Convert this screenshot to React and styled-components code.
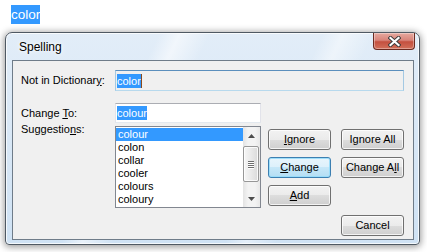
import React from 'react';
import styled, { createGlobalStyle } from 'styled-components';

const GlobalStyle = createGlobalStyle`
  html, body {
    margin: 0;
    padding: 0;
    background: #ffffff;
  }
  body {
    font-family: "Liberation Sans", Arial, sans-serif;
  }
`;

const suggestions = ['colour', 'colon', 'collar', 'cooler', 'colours', 'coloury'];

const CloseIcon = () => (
    <svg width="13" height="11" viewBox="0 0 13 11">
        <path d="M2.5 2 L10.5 9 M10.5 2 L2.5 9" stroke="#3a3a3a" strokeWidth="4" strokeLinecap="square" fill="none" />
        <path d="M2.5 2 L10.5 9 M10.5 2 L2.5 9" stroke="#ffffff" strokeWidth="2.2" strokeLinecap="square" fill="none" />
    </svg>
);

const App = () => {
    return (
        <Page>
            <GlobalStyle />
            <DocText><Highlight>color</Highlight></DocText>
            <Window>
                <TitleBar>
                    <Title>Spelling</Title>
                    <CloseButton><CloseIcon /></CloseButton>
                </TitleBar>
                <Client>
                    <TopRow>
                        <Label>Not in Dictionar<u>y</u>:</Label>
                        <ReadOnlyField>
                            <Selected>color</Selected>
                            <Caret />
                        </ReadOnlyField>
                    </TopRow>
                    <Body>
                        <LabelColumn>
                            <Label $tall>Change <u>T</u>o:</Label>
                            <Label>Suggestio<u>n</u>s:</Label>
                        </LabelColumn>
                        <FieldColumn>
                            <TextField><Selected>colour</Selected></TextField>
                            <ListBox>
                                <Items>
                                    {suggestions.map((s, i) => (
                                        <Item key={s} $active={i === 0}>{s}</Item>
                                    ))}
                                </Items>
                                <ScrollBar>
                                    <ArrowButton>
                                        <svg width="7" height="4" viewBox="0 0 7 4"><path d="M0 4 L3.5 0 L7 4 Z" fill="#4d4d4d" /></svg>
                                    </ArrowButton>
                                    <Track>
                                        <Thumb>
                                            <Grip /><Grip /><Grip /><Grip />
                                        </Thumb>
                                    </Track>
                                    <ArrowButton>
                                        <svg width="7" height="4" viewBox="0 0 7 4"><path d="M0 0 L7 0 L3.5 4 Z" fill="#4d4d4d" /></svg>
                                    </ArrowButton>
                                </ScrollBar>
                            </ListBox>
                        </FieldColumn>
                        <ButtonGrid>
                            <Button><u>I</u>gnore</Button>
                            <Button>I<u>g</u>nore All</Button>
                            <Button $default><u>C</u>hange</Button>
                            <Button>Change A<u>l</u>l</Button>
                            <Button><u>A</u>dd</Button>
                        </ButtonGrid>
                    </Body>
                    <Footer>
                        <Button>Cancel</Button>
                    </Footer>
                </Client>
            </Window>
        </Page>
    );
};

export default App;

// ------ UI Section
const Page = styled.div`
    width: 427px;
    height: 252px;
    padding: 5px 0 0 0;
    box-sizing: border-box;
    overflow: hidden;
`;

const DocText = styled.div`
    padding-left: 11px;
    height: 19px;
`;

const Highlight = styled.span`
    display: inline-block;
    background: #3399ff;
    color: #ffffff;
    font-size: 13.5px;
    line-height: 19px;
`;

const Window = styled.div`
    margin: 8px 0 0 5px;
    width: 415px;
    height: 213px;
    box-sizing: border-box;
    border: 1px solid #4f5963;
    border-radius: 7px 7px 4px 4px;
    padding: 0 5px 4px 6px;
    background:
        linear-gradient(115deg, rgba(255,255,255,0) 30%, rgba(255,255,255,.55) 34%, rgba(255,255,255,0) 40%, rgba(255,255,255,0) 62%, rgba(255,255,255,.45) 66%, rgba(255,255,255,0) 72%),
        linear-gradient(#e2edf8, #cfe2f4);
    box-shadow: 0 1px 7px 1px rgba(0,0,0,.4), inset 0 0 0 1px rgba(255,255,255,.75);
`;

const TitleBar = styled.div`
    height: 27px;
    display: flex;
    justify-content: space-between;
    align-items: flex-start;
`;

const Title = styled.div`
    align-self: center;
    padding-left: 7px;
    font-size: 12px;
    color: #000000;
    text-shadow: 0 0 6px rgba(255,255,255,1), 0 0 3px rgba(255,255,255,1);
`;

const CloseButton = styled.div`
    width: 42px;
    height: 17px;
    box-sizing: border-box;
    margin-right: -1px;
    border: 1px solid #6b2a20;
    border-top: none;
    border-radius: 0 0 4px 4px;
    background: linear-gradient(#e6a99f 0%, #d8847a 45%, #c4503f 55%, #d2705a 100%);
    box-shadow: inset 0 0 0 1px rgba(255,255,255,.35);
    display: flex;
    align-items: center;
    justify-content: center;
`;

const Client = styled.div`
    height: 180px;
    box-sizing: border-box;
    border: 1px solid #6f7c89;
    background: #f0f0f0;
    padding: 9px 9px 3px 8px;
    font-size: 11px;
    color: #000000;
`;

const TopRow = styled.div`
    display: flex;
    align-items: center;
    height: 21px;
`;

const Label = styled.div`
    width: 94px;
    font-size: 11px;
    line-height: ${p => (p.$tall ? '20px' : '13px')};
    white-space: nowrap;
`;

const ReadOnlyField = styled.div`
    flex: 1;
    height: 21px;
    box-sizing: border-box;
    border: 1px solid #a4c9e3;
    border-top-color: #5b8fbd;
    border-bottom-color: #b7d9ed;
    background: #f0f0f0;
    padding: 2px 1px;
    display: flex;
    align-items: center;
`;

const Selected = styled.span`
    background: #3399ff;
    color: #ffffff;
    font-size: 11px;
    line-height: 14px;
`;

const Caret = styled.span`
    width: 1px;
    height: 14px;
    background: #8a4a1c;
`;

const Body = styled.div`
    margin-top: 12px;
    display: flex;
    height: 105px;
`;

const LabelColumn = styled.div`
    width: 94px;
    display: flex;
    flex-direction: column;
`;

const FieldColumn = styled.div`
    width: 146px;
    display: flex;
    flex-direction: column;
    gap: 3px;
`;

const TextField = styled.div`
    height: 20px;
    box-sizing: border-box;
    border: 1px solid #e2e3ea;
    border-top-color: #abadb3;
    border-bottom-color: #e3e9ef;
    background: #ffffff;
    padding: 0 1px;
    display: flex;
    align-items: center;
`;

const ListBox = styled.div`
    height: 82px;
    box-sizing: border-box;
    border: 1px solid #828790;
    background: #ffffff;
    display: flex;
`;

const Items = styled.div`
    flex: 1;
    padding: 1px 0 0 0;
`;

const Item = styled.div`
    height: 13px;
    line-height: 13px;
    padding-left: 2px;
    font-size: 11px;
    background: ${p => (p.$active ? '#3399ff' : 'transparent')};
    color: ${p => (p.$active ? '#ffffff' : '#000000')};
`;

const ScrollBar = styled.div`
    width: 17px;
    display: flex;
    flex-direction: column;
    background: linear-gradient(90deg, #e3e3e3, #f3f3f3 30%, #f3f3f3 70%, #e8e8e8);
`;

const ArrowButton = styled.div`
    height: 17px;
    display: flex;
    align-items: center;
    justify-content: center;
`;

const Track = styled.div`
    flex: 1;
    padding-top: 2px;
`;

const Thumb = styled.div`
    height: 36px;
    box-sizing: border-box;
    margin: 0 1px 0 0;
    border: 1px solid #979797;
    border-radius: 2px;
    background: linear-gradient(90deg, #f6f6f6, #e9e9e9 50%, #dadada);
    box-shadow: inset 0 0 0 1px rgba(255,255,255,.8);
    display: flex;
    flex-direction: column;
    align-items: center;
    justify-content: center;
    gap: 1px;
`;

const Grip = styled.div`
    width: 6px;
    height: 1px;
    background: #6e6e6e;
    box-shadow: 0 1px 0 #ffffff;
`;

const ButtonGrid = styled.div`
    margin: 26px 0 0 7px;
    display: grid;
    grid-template-columns: 63px 63px;
    column-gap: 10px;
    row-gap: 7px;
    align-content: start;
`;

const Button = styled.div`
    width: 63px;
    height: 21px;
    box-sizing: border-box;
    border: 1px solid ${p => (p.$default ? '#3c7fb1' : '#707070')};
    border-radius: 3px;
    background: ${p => (p.$default
        ? 'linear-gradient(#e8f5fc 0%, #dcf0fb 50%, #c6e7f8 50%, #b4def4 100%)'
        : 'linear-gradient(#f2f2f2 0%, #ebebeb 50%, #dddddd 50%, #cfcfcf 100%)')};
    box-shadow: inset 0 0 0 1px ${p => (p.$default ? 'rgba(150,220,250,.9)' : 'rgba(255,255,255,.75)')};
    font-size: 11px;
    line-height: 19px;
    text-align: center;
    white-space: nowrap;
`;

const Footer = styled.div`
    margin-top: 7px;
    display: flex;
    justify-content: flex-end;
`;
